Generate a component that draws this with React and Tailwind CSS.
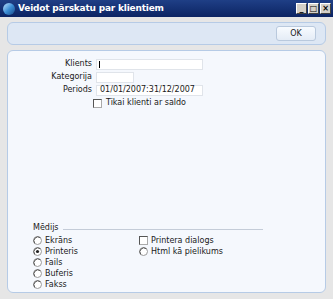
import React from "react";

const font = { fontFamily: "'DejaVu Sans', 'Liberation Sans', sans-serif" };

function Radio({ checked }) {
  return (
    <svg width="9" height="9" viewBox="0 0 9 9" className="shrink-0">
      <circle cx="4.5" cy="4.5" r="4" fill="#fff" stroke="#9a9a9a" strokeWidth="1" />
      <path d="M1.7 7.3 A4 4 0 0 1 7.3 1.7" fill="none" stroke="#555" strokeWidth="1" />
      {checked && <circle cx="4.5" cy="4.5" r="1.6" fill="#222" />}
    </svg>
  );
}

function Check() {
  return <div className="w-[9px] h-[9px] shrink-0 bg-white border border-[#555] border-r-[#aaa] border-b-[#aaa]" />;
}

export default function App() {
  return (
    <div className="w-[333px] h-[299px] bg-[#e6e6e6] flex flex-col text-[8px] text-[#1a1a1a] overflow-hidden" style={font}>
      <div className="h-[17px] bg-gradient-to-b from-[#1f3f86] to-[#0c2463] flex items-center pl-[3px] pr-[2px]">
        <div className="w-[12px] h-[12px] rounded-full bg-gradient-to-br from-[#bfe6ff] via-[#3c8fd6] to-[#1a4a8a] mr-[3px]" />
        <span className="text-white font-bold text-[9px] tracking-[-0.2px]">Veidot pārskatu par klientiem</span>
        <div className="ml-auto flex gap-[1px]">
          {["_", "□", "×"].map((c, i) => (
            <div key={i} className="w-[11px] h-[11px] bg-[#d4d0c8] border border-white border-r-[#404040] border-b-[#404040] flex items-center justify-center text-[8px] leading-none font-bold text-black">
              {c}
            </div>
          ))}
        </div>
      </div>
      <div className="flex-1 flex flex-col px-[7px] pt-[5px] pb-[6px] gap-[5px]">
        <div className="h-[23px] rounded-[6px] border border-[#b6cbe6] bg-[#dde7f4] flex items-center justify-end pr-[9px]">
          <div className="w-[40px] h-[15px] rounded-[3px] border border-[#b9c9dd] bg-gradient-to-b from-[#f8fbff] to-[#e4ecf6] flex items-center justify-center text-[8px]">OK</div>
        </div>
        <div className="flex-1 rounded-[6px] border border-[#b6cbe6] bg-[#f5f8fd] flex flex-col pt-[7px] pb-[2px]">
          <div className="flex flex-col gap-[1px]">
            <div className="flex items-center h-[12px]">
              <span className="w-[88px] text-right pr-[4px]">Klients</span>
              <div className="w-[107px] h-[11px] bg-white border border-[#e0e4ea] flex items-center pl-[2px]"><div className="w-[1px] h-[7px] bg-black" /></div>
            </div>
            <div className="flex items-center h-[12px]">
              <span className="w-[88px] text-right pr-[4px]">Kategorija</span>
              <div className="w-[38px] h-[11px] bg-white border border-[#e0e4ea]" />
            </div>
            <div className="flex items-center h-[12px]">
              <span className="w-[88px] text-right pr-[4px]">Periods</span>
              <div className="w-[107px] h-[11px] bg-white border border-[#e0e4ea] flex items-center pl-[3px]">01/01/2007:31/12/2007</div>
            </div>
            <div className="flex items-center h-[12px] pl-[85px] gap-[4px]">
              <Check />
              <span>Tikai klienti ar saldo</span>
            </div>
          </div>
          <div className="mt-auto pl-[25px] pr-[62px]">
            <div className="flex items-center gap-[4px] mb-[1px]">
              <span>Mēdijs</span>
              <div className="flex-1 h-[1px] bg-[#c4ccd8] mt-[3px]" />
            </div>
            <div className="flex">
              <div className="w-[106px] flex flex-col">
                {["Ekrāns", "Printeris", "Fails", "Buferis", "Fakss"].map((l, i) => (
                  <div key={l} className="flex items-center gap-[3px] h-[11px]">
                    <Radio checked={i === 1} />
                    <span>{l}</span>
                  </div>
                ))}
              </div>
              <div className="flex flex-col">
                <div className="flex items-center gap-[3px] h-[11px]"><Check /><span>Printera dialogs</span></div>
                <div className="flex items-center gap-[3px] h-[11px]"><Radio /><span>Html kā pielikums</span></div>
              </div>
            </div>
          </div>
        </div>
      </div>
    </div>
  );
}
